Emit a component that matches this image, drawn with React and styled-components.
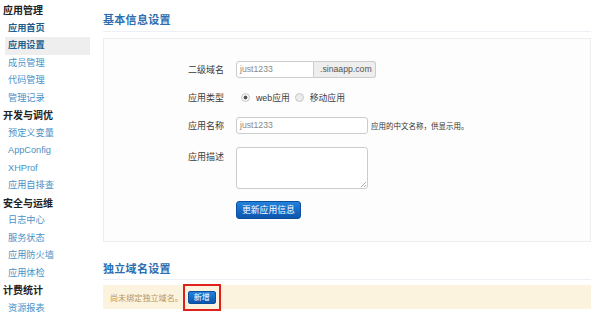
import React from "react";
import styled, { createGlobalStyle } from "styled-components";

const GlobalStyle = createGlobalStyle`
  html, body {
    margin: 0;
    padding: 0;
    background: #fff;
    font-family: "Liberation Sans", "Noto Sans CJK SC", sans-serif;
    font-size: 9px;
    color: #555;
  }
`;

const Page = styled.div`
  display: flex;
  width: 600px;
  height: 316px;
  overflow: hidden;
`;

const Sidebar = styled.nav`
  width: 90px;
  flex-shrink: 0;
  padding-top: 2px;
`;

const GroupTitle = styled.div`
  height: 17.5px;
  line-height: 17.5px;
  padding-left: 3px;
  font-size: 10px;
  font-weight: bold;
  color: #222;
`;

const NavItem = styled.a`
  display: block;
  height: 17.5px;
  line-height: 17.5px;
  margin-left: 5px;
  padding-left: 3px;
  font-size: 9.2px;
  color: ${(p) => (p.$strong ? "#1d5f8f" : "#4a92c6")};
  font-weight: ${(p) => (p.$strong ? "bold" : "normal")};
  background: ${(p) => (p.$active ? "#eeeeee" : "transparent")};
  text-decoration: none;
`;

const Main = styled.main`
  flex: 1;
  padding: 0 9px 0 13px;
`;

const SectionTitle = styled.h3`
  margin: 0;
  padding-top: 11px;
  height: 20px;
  font-size: 11px;
  font-weight: bold;
  color: #2d6eb0;
  border-bottom: 1px solid #eceff3;
  letter-spacing: 0.3px;
`;

const Panel = styled.div`
  margin-top: 6px;
  height: 204px;
  border: 1px solid #eeeeee;
  background: #fdfdfd;
  padding-top: 22px;
  box-sizing: border-box;
`;

const FormRow = styled.div`
  display: flex;
  align-items: ${(p) => (p.$top ? "flex-start" : "center")};
  margin-bottom: ${(p) => p.$gap}px;
`;

const Label = styled.label`
  width: 120px;
  text-align: right;
  padding-right: 12px;
  font-size: 9px;
  color: #3a3a3a;
  padding-top: ${(p) => (p.$top ? "3px" : "0")};
`;

const InputGroup = styled.div`
  display: flex;
`;

const TextInput = styled.div`
  width: ${(p) => p.$w}px;
  height: 17px;
  box-sizing: border-box;
  border: 1px solid #cccccc;
  border-radius: ${(p) => (p.$joined ? "3px 0 0 3px" : "3px")};
  background: #fff;
  padding-left: 3px;
  line-height: 15px;
  font-size: 8.7px;
  color: #888;
`;

const AddOn = styled.span`
  height: 17px;
  box-sizing: border-box;
  border: 1px solid #cccccc;
  border-left: none;
  border-radius: 0 3px 3px 0;
  background: #eeeeee;
  padding: 0 3px 0 6px;
  line-height: 15px;
  font-size: 8.7px;
  color: #555;
`;

const TextArea = styled.div`
  position: relative;
  width: 132px;
  height: 42px;
  box-sizing: border-box;
  border: 1px solid #cccccc;
  border-radius: 3px;
  background: #fff;
`;

const Grip = styled.span`
  position: absolute;
  right: 1px;
  bottom: 1px;
  width: 5px;
  height: 5px;
  background: linear-gradient(135deg, transparent 45%, #aaa 45%, #aaa 55%, transparent 55%, transparent 70%, #aaa 70%, #aaa 80%, transparent 80%);
`;

const Radio = styled.span`
  display: inline-block;
  width: 7px;
  height: 7px;
  border-radius: 50%;
  border: 1px solid #c8c8c8;
  background: ${(p) =>
    p.$checked
      ? "radial-gradient(circle, #555 0 1.7px, #f4f4f4 2.2px)"
      : "#ececec"};
  margin: 0 6px 0 5px;
  vertical-align: middle;
`;

const RadioText = styled.span`
  font-size: 8.8px;
  color: #3a3a3a;
  vertical-align: middle;
`;

const Help = styled.span`
  margin-left: 3px;
  font-size: 7.5px;
  color: #333;
`;

const PrimaryButton = styled.button`
  margin-left: 132px;
  height: ${(p) => (p.$small ? 13 : 18)}px;
  padding: 0 5px;
  border: 1px solid #0b4f9e;
  border-radius: ${(p) => (p.$small ? 2 : 3)}px;
  background: linear-gradient(#2282dc, #0c55ad);
  color: #fff;
  font-family: "Noto Sans CJK SC", sans-serif;
  font-size: ${(p) => (p.$small ? 8 : 8.8)}px;
  line-height: 1;
  cursor: pointer;
`;

const SecondTitle = styled(SectionTitle)`
  padding-top: 18px;
  height: 19px;
`;

const Alert = styled.div`
  margin-top: 5px;
  height: 24px;
  background: #fcf3df;
  display: flex;
  align-items: center;
  padding-left: 7px;
  font-size: 8.1px;
  color: #b99357;
`;

const Highlight = styled.span`
  display: inline-flex;
  align-items: center;
  justify-content: center;
  flex-shrink: 0;
  width: 38px;
  height: 27px;
  border: 2px solid #e0201b;
  box-sizing: border-box;

  ${PrimaryButton} {
    margin-left: 0;
  }
`;

const nav = [
  { title: "应用管理", items: ["应用首页", "应用设置", "成员管理", "代码管理", "管理记录"] },
  { title: "开发与调优", items: ["预定义变量", "AppConfig", "XHProf", "应用自排查"] },
  { title: "安全与运维", items: ["日志中心", "服务状态", "应用防火墙", "应用体检"] },
  { title: "计费统计", items: ["资源报表"] },
];

export default function App() {
  return (
    <Page>
      <GlobalStyle />
      <Sidebar>
        {nav.map((g) => (
          <React.Fragment key={g.title}>
            <GroupTitle>{g.title}</GroupTitle>
            {g.items.map((it, i) => (
              <NavItem
                key={it}
                $strong={g.title === "应用管理" && i < 2}
                $active={it === "应用设置"}
              >
                {it}
              </NavItem>
            ))}
          </React.Fragment>
        ))}
      </Sidebar>
      <Main>
        <SectionTitle>基本信息设置</SectionTitle>
        <Panel>
          <FormRow $gap={13}>
            <Label>二级域名</Label>
            <InputGroup>
              <TextInput $w={78} $joined>just1233</TextInput>
              <AddOn>.sinaapp.com</AddOn>
            </InputGroup>
          </FormRow>
          <FormRow $gap={13}>
            <Label>应用类型</Label>
            <div>
              <Radio $checked />
              <RadioText>web应用</RadioText>
              <Radio />
              <RadioText>移动应用</RadioText>
            </div>
          </FormRow>
          <FormRow $gap={13}>
            <Label>应用名称</Label>
            <TextInput $w={132}>just1233</TextInput>
            <Help>应用的中文名称，供显示用。</Help>
          </FormRow>
          <FormRow $top $gap={12}>
            <Label $top>应用描述</Label>
            <TextArea>
              <Grip />
            </TextArea>
          </FormRow>
          <PrimaryButton>更新应用信息</PrimaryButton>
        </Panel>
        <SecondTitle>独立域名设置</SecondTitle>
        <Alert>
          尚未绑定独立域名。
          <Highlight>
            <PrimaryButton $small>新增</PrimaryButton>
          </Highlight>
        </Alert>
      </Main>
    </Page>
  );
}
